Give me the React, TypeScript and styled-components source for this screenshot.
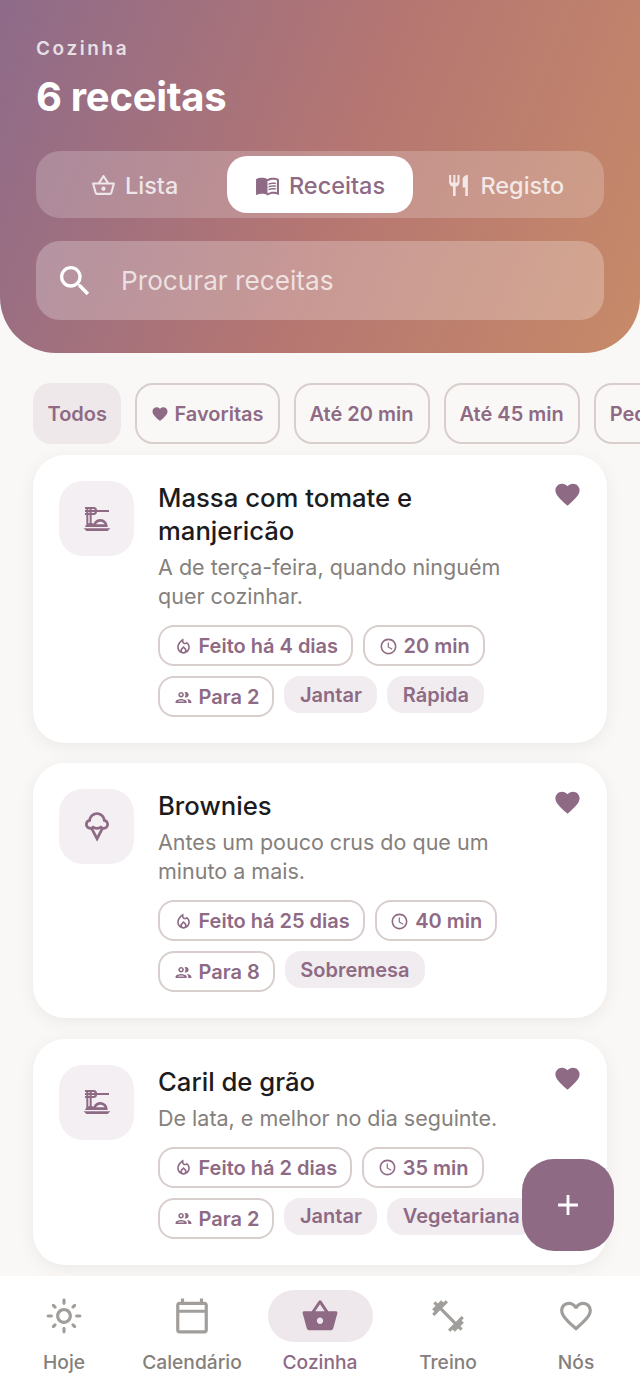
import styled, { createGlobalStyle } from 'styled-components';
import type { ReactNode } from 'react';
import {
    MdAdd,
    MdFavorite,
    MdFavoriteBorder,
    MdFitnessCenter,
    MdMenuBook,
    MdOutlineCalendarToday,
    MdOutlineDinnerDining,
    MdOutlineGroup,
    MdOutlineIcecream,
    MdOutlineLightMode,
    MdOutlineLocalFireDepartment,
    MdOutlineSchedule,
    MdOutlineShoppingBasket,
    MdRestaurant,
    MdSearch,
    MdShoppingBasket,
} from 'react-icons/md';

const GlobalStyle = createGlobalStyle`
    html, body {
        margin: 0;
        padding: 0;
        background: #faf8f6;
    }
    * {
        box-sizing: border-box;
    }
`;

type Recipe = {
    title: string;
    description: string;
    icon: ReactNode;
    made: string;
    time: string;
    serves: string;
    tags: string[];
};

const recipes: Recipe[] = [
    {
        title: 'Massa com tomate e manjericão',
        description: 'A de terça-feira, quando ninguém quer cozinhar.',
        icon: <MdOutlineDinnerDining />,
        made: 'Feito há 4 dias',
        time: '20 min',
        serves: 'Para 2',
        tags: ['Jantar', 'Rápida'],
    },
    {
        title: 'Brownies',
        description: 'Antes um pouco crus do que um minuto a mais.',
        icon: <MdOutlineIcecream />,
        made: 'Feito há 25 dias',
        time: '40 min',
        serves: 'Para 8',
        tags: ['Sobremesa'],
    },
    {
        title: 'Caril de grão',
        description: 'De lata, e melhor no dia seguinte.',
        icon: <MdOutlineDinnerDining />,
        made: 'Feito há 2 dias',
        time: '35 min',
        serves: 'Para 2',
        tags: ['Jantar', 'Vegetariana'],
    },
];

const App = () => {
    return (
        <Screen>
            <GlobalStyle />
            <Main>
                <Header>
                    <Eyebrow>Cozinha</Eyebrow>
                    <PageTitle>6 receitas</PageTitle>
                    <Tabs>
                        <Tab>
                            <MdOutlineShoppingBasket />
                            Lista
                        </Tab>
                        <Tab $active>
                            <MdMenuBook />
                            Receitas
                        </Tab>
                        <Tab>
                            <MdRestaurant />
                            Registo
                        </Tab>
                    </Tabs>
                    <SearchBar>
                        <MdSearch />
                        <span>Procurar receitas</span>
                    </SearchBar>
                </Header>

                <Filters>
                    <Filter $active>Todos</Filter>
                    <Filter>
                        <MdFavorite />
                        Favoritas
                    </Filter>
                    <Filter>Até 20 min</Filter>
                    <Filter>Até 45 min</Filter>
                    <Filter>Pequeno-almoço</Filter>
                </Filters>

                <Cards>
                    {recipes.map((recipe) => (
                        <Card key={recipe.title}>
                            <IconTile>{recipe.icon}</IconTile>
                            <CardBody>
                                <CardTitle>{recipe.title}</CardTitle>
                                <CardText>{recipe.description}</CardText>
                                <Tags>
                                    <OutlineTag>
                                        <MdOutlineLocalFireDepartment />
                                        {recipe.made}
                                    </OutlineTag>
                                    <OutlineTag>
                                        <MdOutlineSchedule />
                                        {recipe.time}
                                    </OutlineTag>
                                    <OutlineTag>
                                        <MdOutlineGroup />
                                        {recipe.serves}
                                    </OutlineTag>
                                    {recipe.tags.map((tag) => (
                                        <FilledTag key={tag}>{tag}</FilledTag>
                                    ))}
                                </Tags>
                            </CardBody>
                            <HeartButton>
                                <MdFavorite />
                            </HeartButton>
                        </Card>
                    ))}
                </Cards>

                <Fab>
                    <MdAdd />
                </Fab>
            </Main>

            <BottomNav>
                <NavItem>
                    <NavIcon><MdOutlineLightMode /></NavIcon>
                    Hoje
                </NavItem>
                <NavItem>
                    <NavIcon><MdOutlineCalendarToday /></NavIcon>
                    Calendário
                </NavItem>
                <NavItem $active>
                    <NavIcon $active><MdShoppingBasket /></NavIcon>
                    Cozinha
                </NavItem>
                <NavItem>
                    <NavIcon><MdFitnessCenter /></NavIcon>
                    Treino
                </NavItem>
                <NavItem>
                    <NavIcon><MdFavoriteBorder /></NavIcon>
                    Nós
                </NavItem>
            </BottomNav>
        </Screen>
    );
};

const Screen = styled.div`
    width: 640px;
    height: 1385px;
    display: flex;
    flex-direction: column;
    overflow: hidden;
    background: #faf8f6;
    font-family: Inter, "Noto Sans", sans-serif;
`;

const Main = styled.main`
    position: relative;
    flex: 1;
    min-height: 0;
    overflow: hidden;
`;

const Header = styled.header`
    height: 353px;
    padding: 38px 36px 0;
    border-radius: 0 0 56px 56px;
    background: linear-gradient(112deg, #8e6b8a 0%, #b57672 52%, #c78a68 100%);
`;

const Eyebrow = styled.div`
    height: 22px;
    font-size: 19px;
    line-height: 22px;
    font-weight: 600;
    letter-spacing: 2.6px;
    color: rgba(255, 255, 255, 0.8);
`;

const PageTitle = styled.h1`
    margin: 11px 0 0;
    height: 52px;
    font-size: 40px;
    line-height: 52px;
    font-weight: 700;
    letter-spacing: -0.3px;
    color: #fff;
`;

const Tabs = styled.div`
    display: flex;
    margin-top: 28px;
    height: 67px;
    padding: 5px 6px;
    border-radius: 24px;
    background: rgba(255, 255, 255, 0.2);
`;

const Tab = styled.div<{ $active?: boolean }>`
    flex: 1;
    display: flex;
    align-items: center;
    justify-content: center;
    gap: 9px;
    padding-top: 1px;
    border-radius: 20px;
    font-size: 23.5px;
    font-weight: 500;
    background: ${(p) => (p.$active ? '#fff' : 'transparent')};
    color: ${(p) => (p.$active ? '#8e6a85' : 'rgba(255, 255, 255, 0.78)')};

    svg {
        width: 25px;
        height: 25px;
    }
`;

const SearchBar = styled.div`
    display: flex;
    align-items: center;
    margin-top: 23px;
    height: 79px;
    padding: 0 19px;
    gap: 26px;
    border-radius: 24px;
    background: rgba(255, 255, 255, 0.25);
    font-size: 26.2px;
    color: rgba(255, 255, 255, 0.72);

    svg {
        width: 40px;
        height: 40px;
        color: #fff;
    }
`;

const Filters = styled.div`
    display: flex;
    gap: 14px;
    margin-top: 30px;
    padding-left: 33px;
    overflow: hidden;
`;

const Filter = styled.div<{ $active?: boolean }>`
    flex-shrink: 0;
    display: flex;
    align-items: center;
    gap: 5px;
    height: 61px;
    padding: 0 ${(p) => (p.$active ? '12.5px' : '14px')};
    border-radius: 18px;
    font-size: 20px;
    font-weight: 600;
    color: #8e6a85;
    border: 2px solid ${(p) => (p.$active ? 'transparent' : '#d8cfcd')};
    background: ${(p) => (p.$active ? '#eee8ea' : 'transparent')};

    svg {
        width: 18px;
        height: 18px;
    }
`;

const Cards = styled.div`
    display: flex;
    flex-direction: column;
    gap: 20.2px;
    margin-top: 11.3px;
    padding: 0 33px;
`;

const Card = styled.article`
    position: relative;
    display: flex;
    gap: 24px;
    padding: 26px;
    border-radius: 32px;
    background: #fff;
    box-shadow: 0 4px 16px rgba(80, 60, 60, 0.08);
`;

const IconTile = styled.div`
    flex-shrink: 0;
    display: flex;
    align-items: center;
    justify-content: center;
    width: 75px;
    height: 75px;
    border-radius: 24px;
    background: #f4eff3;
    color: #8e6a85;

    svg {
        width: 32px;
        height: 32px;
    }
`;

const CardBody = styled.div`
    flex: 1;
    min-width: 0;
`;

const CardTitle = styled.h2`
    margin: 0;
    padding-right: 40px;
    font-size: 25.7px;
    line-height: 33px;
    font-weight: 500;
    color: #1c1b1d;
`;

const CardText = styled.p`
    margin: 6px 0 0;
    padding-right: 30px;
    font-size: 21.5px;
    line-height: 29px;
    color: #85807c;
`;

const Tags = styled.div`
    display: flex;
    flex-wrap: wrap;
    align-items: flex-start;
    gap: 10px;
    margin-top: 14px;
`;

const OutlineTag = styled.div`
    display: flex;
    align-items: center;
    gap: 6px;
    height: 41px;
    padding: 1px 13px 0 13.5px;
    border: 2px solid #d8cfcd;
    border-radius: 16px;
    font-size: 20px;
    font-weight: 600;
    color: #8e6a85;

    svg {
        width: 19px;
        height: 19px;
    }
`;

const FilledTag = styled.div`
    display: flex;
    align-items: center;
    height: 37px;
    padding: 0 15.5px;
    border-radius: 16px;
    background: #f1ecef;
    font-size: 20px;
    font-weight: 600;
    color: #8e6a85;
`;

const HeartButton = styled.div`
    position: absolute;
    top: 25px;
    right: 25.5px;
    color: #8e6a85;

    svg {
        display: block;
        width: 29px;
        height: 29px;
    }
`;

const Fab = styled.div`
    position: absolute;
    left: 522px;
    top: 1159px;
    display: flex;
    align-items: center;
    justify-content: center;
    width: 92px;
    height: 92px;
    border-radius: 32px;
    background: #8e6a85;
    color: #fff;

    svg {
        width: 34px;
        height: 34px;
    }
`;

const BottomNav = styled.nav`
    flex-shrink: 0;
    display: flex;
    height: 109px;
    padding-top: 14px;
    background: #fff;
`;

const NavItem = styled.div<{ $active?: boolean }>`
    flex: 1;
    display: flex;
    flex-direction: column;
    align-items: center;
    gap: 8px;
    font-size: 19.2px;
    font-weight: 550;
    color: ${(p) => (p.$active ? '#8e6a85' : '#85807c')};
`;

const NavIcon = styled.div<{ $active?: boolean }>`
    display: flex;
    align-items: center;
    justify-content: center;
    width: 105px;
    height: 52px;
    border-radius: 26px;
    background: ${(p) => (p.$active ? '#eee8ec' : 'transparent')};
    color: ${(p) => (p.$active ? '#8e6a85' : '#a09d9a')};

    svg {
        width: 38px;
        height: 38px;
    }
`;

export default App;
